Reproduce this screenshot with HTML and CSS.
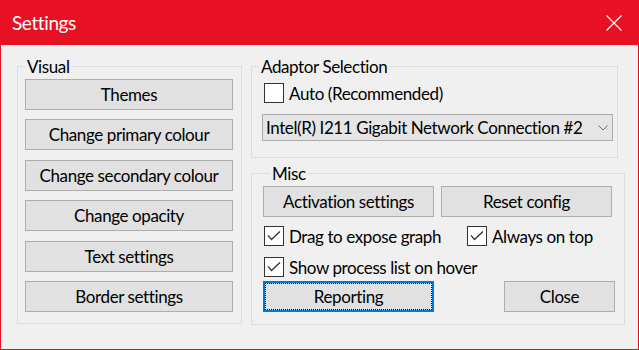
FILE: index.html
```html
<!DOCTYPE html>
<html>
<head>
<meta charset="utf-8">
<title>Settings</title>
<link rel="stylesheet" href="styles.css">
</head>
<body>
<div class="window">
  <div class="titlebar">
    <span class="title">Settings</span>
    <svg class="close-x" width="16" height="16" viewBox="0 0 16 16"><path d="M0.5 0.5L15.5 15.5M15.5 0.5L0.5 15.5" stroke="#fff" stroke-width="1.1" fill="none"/></svg>
  </div>
  <div class="content">
    <fieldset class="group visual">
      <legend>Visual</legend>
      <div class="btn-stack">
        <button class="btn">Themes</button>
        <button class="btn">Change primary colour</button>
        <button class="btn">Change secondary colour</button>
        <button class="btn">Change opacity</button>
        <button class="btn">Text settings</button>
        <button class="btn">Border settings</button>
      </div>
    </fieldset>
    <div class="right-col">
      <fieldset class="group adaptor">
        <legend>Adaptor Selection</legend>
        <div class="check auto-row"><span class="box"></span><span>Auto (Recommended)</span></div>
        <div class="dropdown">
          <span class="dd-text">Intel(R) I211 Gigabit Network Connection #2</span>
          <svg class="chev" width="10" height="6" viewBox="0 0 10 6"><path d="M0.5 0.5L5 5L9.5 0.5" stroke="#6d6d6d" stroke-width="1" fill="none"/></svg>
        </div>
      </fieldset>
      <fieldset class="group misc">
        <legend>Misc</legend>
        <div class="btn-row">
          <button class="btn wide">Activation settings</button>
          <button class="btn wide">Reset config</button>
        </div>
        <div class="check-grid first">
          <div class="check"><span class="box checked"><svg width="18" height="18" viewBox="0 0 18 18"><path d="M3 8.3L6.5 12.5L15 4.5" stroke="#333" stroke-width="1.3" fill="none"/></svg></span><span>Drag to expose graph</span></div>
          <div class="check"><span class="box checked"><svg width="18" height="18" viewBox="0 0 18 18"><path d="M3 8.3L6.5 12.5L15 4.5" stroke="#333" stroke-width="1.3" fill="none"/></svg></span><span>Always on top</span></div>
        </div>
        <div class="check-grid second">
          <div class="check"><span class="box checked"><svg width="18" height="18" viewBox="0 0 18 18"><path d="M3 8.3L6.5 12.5L15 4.5" stroke="#333" stroke-width="1.3" fill="none"/></svg></span><span>Show process list on hover</span></div>
        </div>
        <div class="btn-row bottom">
          <button class="btn wide focused">Reporting</button>
          <button class="btn close-btn">Close</button>
        </div>
      </fieldset>
    </div>
  </div>
</div>
</body>
</html>
```
FILE: styles.css
```css
* { box-sizing: border-box; }
body {
  margin: 0;
  background: #f0f0f0;
  font-family: "Lato", "Liberation Sans", sans-serif;
  color: #000;
  letter-spacing: -0.4px;
}
.window {
  width: 639px;
  height: 350px;
  border: 1px solid #e81123;
  background: #f0f0f0;
  display: flex;
  flex-direction: column;
  overflow: hidden;
}
.titlebar {
  flex: none;
  height: 44px;
  background: #e81123;
  color: #fff;
  display: flex;
  align-items: center;
  justify-content: space-between;
  padding: 0 16px 0 11px;
}
.title { font-size: 19px; line-height: 24px; }
.close-x { display: block; }
.content {
  display: flex;
  align-items: flex-start;
  padding-left: 16px;
  gap: 9px;
}
.group {
  margin: 0;
  padding: 0;
  min-width: 0;
  border: 1px solid #dcdcdc;
}
.group legend {
  font-size: 17px;
  line-height: 21px;
  padding: 0 2px;
  margin-left: 7px;
}
.visual { width: 225px; margin-top: 11px; }
.btn-stack {
  display: grid;
  row-gap: 9.4px;
  padding: 2px 8px 11px 7px;
}
.btn {
  height: 31px;
  margin: 0;
  padding: 0;
  background: #e1e1e1;
  border: 1px solid #adadad;
  border-radius: 0;
  font-family: inherit;
  font-size: 17px;
  letter-spacing: -0.4px;
  color: #000;
}
.right-col { display: flex; flex-direction: column; margin-top: 11px; }
.adaptor { width: 367px; padding: 0 0 16px 0; }
.check {
  display: flex;
  align-items: center;
  gap: 5px;
  height: 20px;
  font-size: 17px;
  white-space: nowrap;
}
.box {
  flex: none;
  width: 20px;
  height: 20px;
  background: #fff;
  border: 1px solid #333;
  display: flex;
  align-items: center;
  justify-content: center;
}
.auto-row { margin: 6px 0 0 12px; }
.dropdown {
  margin: 11px 0 0 10px;
  width: 351px;
  height: 27px;
  background: #e5e5e5;
  border: 1px solid #acacac;
  display: flex;
  align-items: center;
  padding-left: 3px;
  font-size: 17px;
}
.dd-text { width: 318px; overflow: hidden; white-space: nowrap; }
.chev { margin-left: 14px; }
.misc { width: 374px; margin-top: 5px; padding: 0 9px 12px 11px; }
.btn-row { display: flex; gap: 7px; margin-top: 2px; }
.wide { width: 171px; }
.check-grid { display: grid; grid-template-columns: 203px auto; padding-left: 1px; }
.check-grid.first { margin-top: 9px; }
.check-grid.second { margin-top: 11px; }
.btn-row.bottom { margin-top: 4px; gap: 70px; }
.close-btn { width: 111px; }
.focused {
  border: 2px solid #0078d7;
  outline: 1px dotted #000;
  outline-offset: -3px;
}
```
